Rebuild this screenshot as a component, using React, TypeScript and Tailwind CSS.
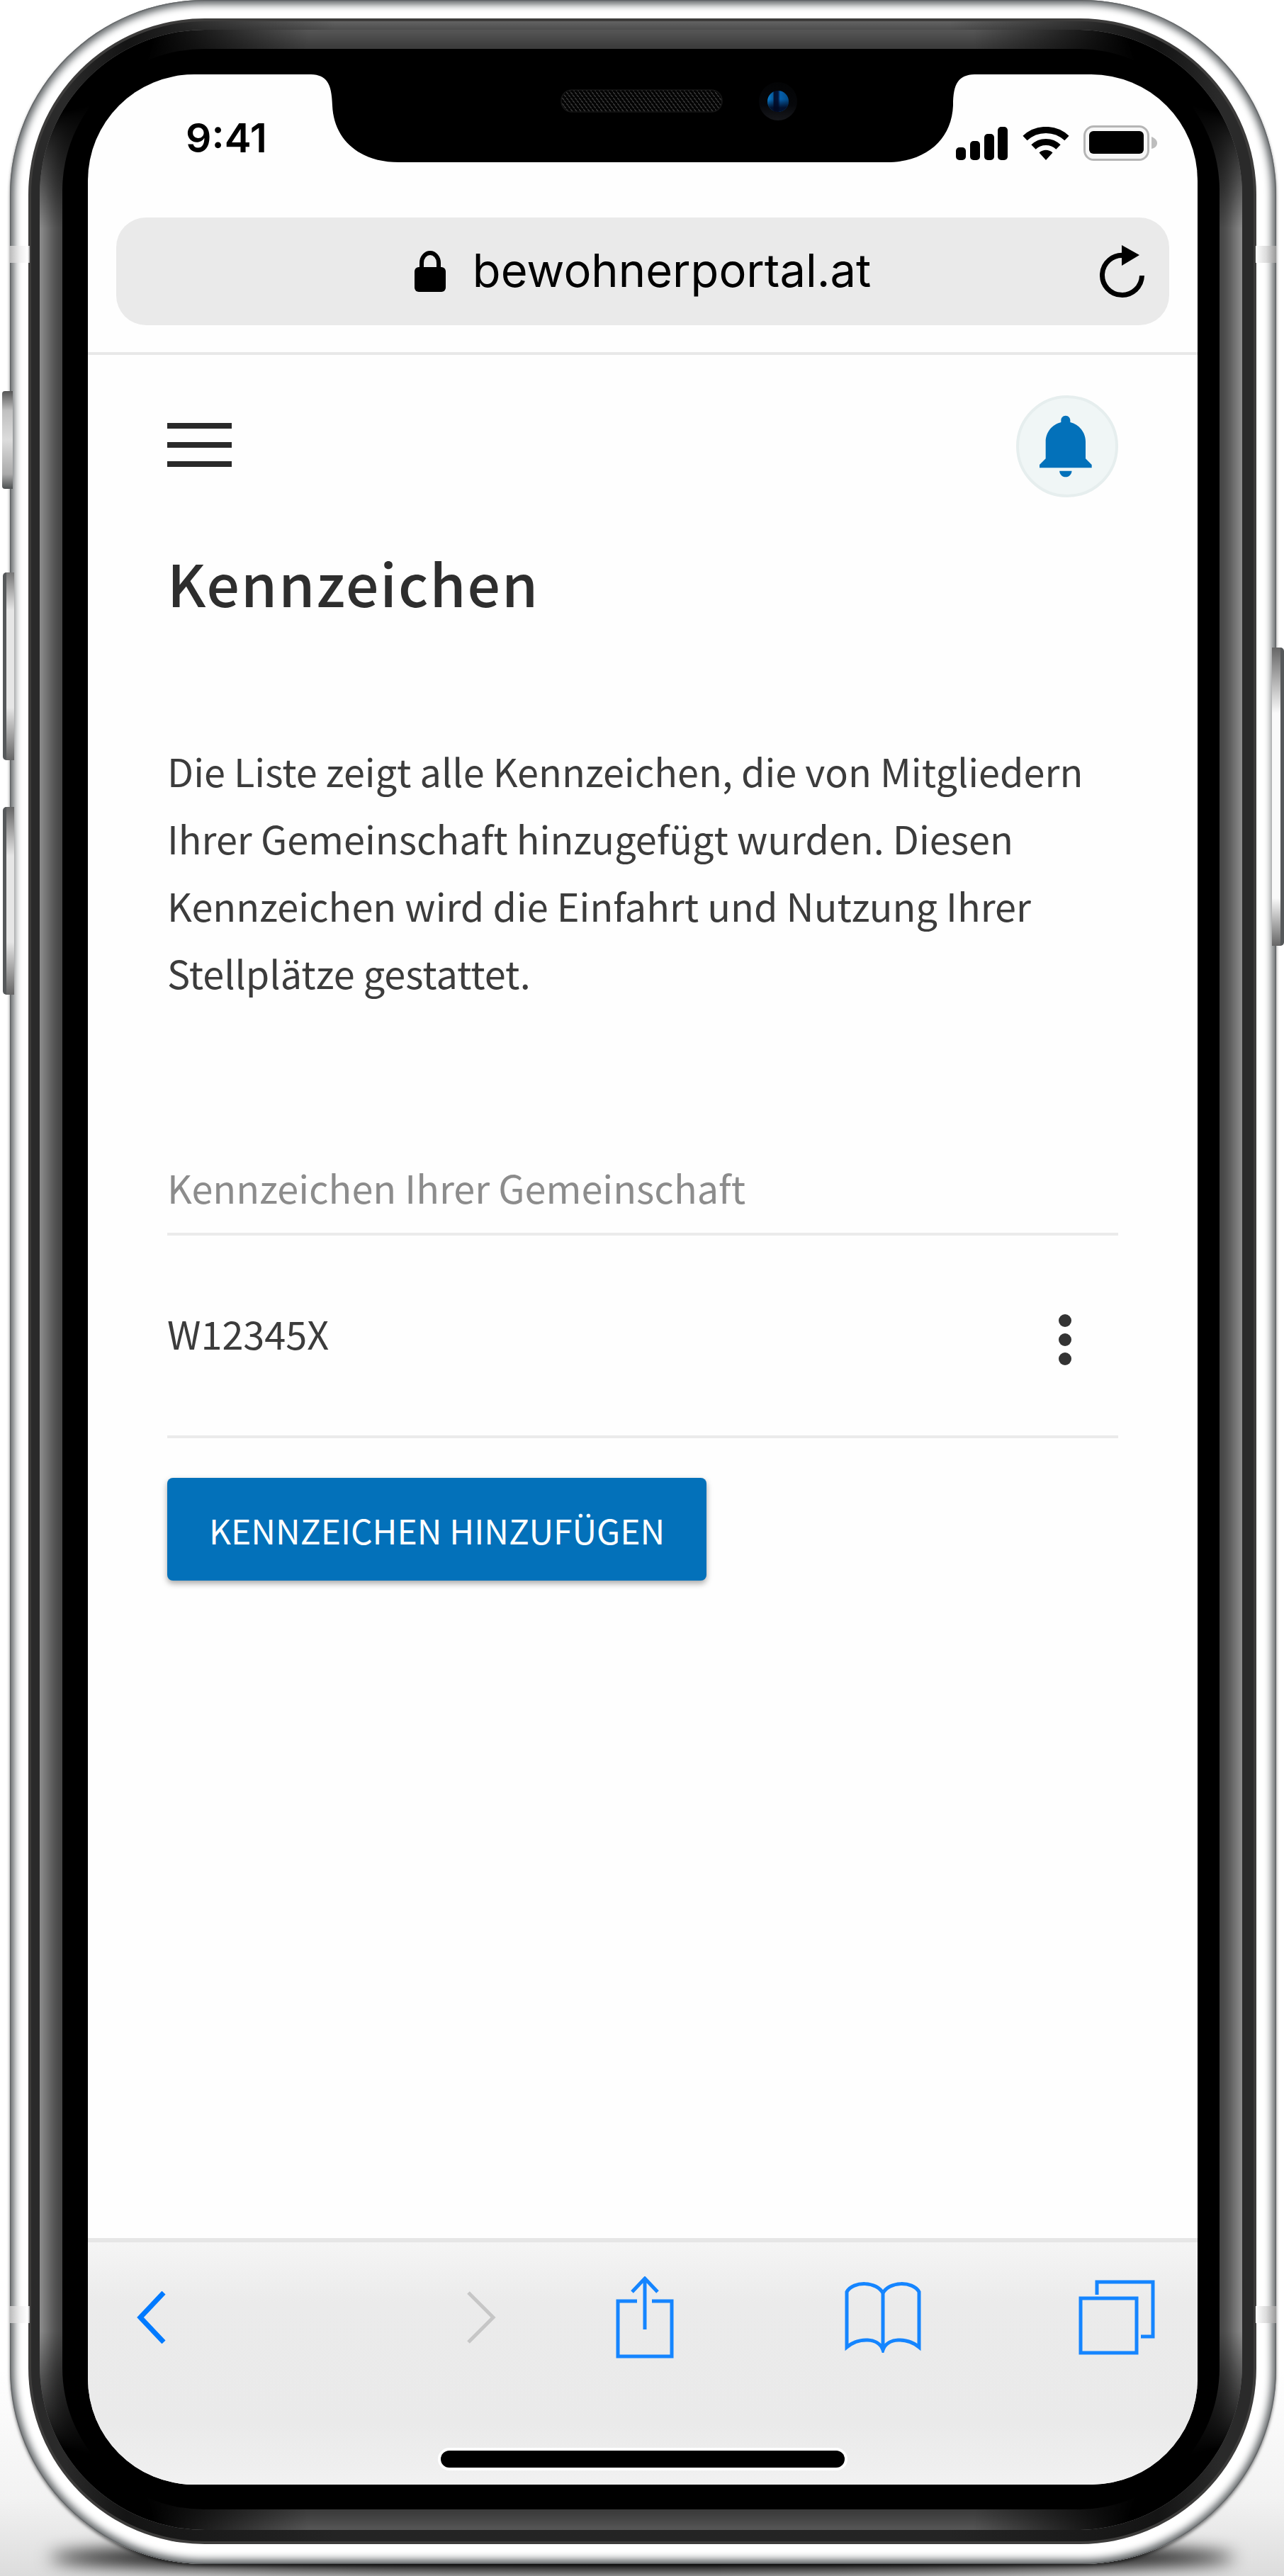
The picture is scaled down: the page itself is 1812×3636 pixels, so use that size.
import type { ReactNode } from "react";

function Notch() {
  return (
    <svg
      aria-hidden="true"
      viewBox="0 0 936 124"
      className="absolute left-1/2 top-0 h-[124px] w-[936px] -translate-x-1/2"
    >
      <defs>
        <pattern id="mesh" width="6" height="8" patternUnits="userSpaceOnUse">
          <rect width="6" height="8" fill="#040404" />
          <path d="M0 1l3 3M3 5l3 3" stroke="#3c3c3c" strokeWidth="1.4" />
        </pattern>
        <linearGradient id="lens" x1="0" y1="0" x2="1" y2="0">
          <stop offset="0" stopColor="#0a7fd0" />
          <stop offset=".25" stopColor="#075a9c" />
          <stop offset=".32" stopColor="#02102f" />
          <stop offset=".5" stopColor="#02143a" />
          <stop offset=".6" stopColor="#0660ac" />
          <stop offset="1" stopColor="#034a86" />
        </linearGradient>
        <linearGradient id="lensShade" x1="0" y1="0" x2="0" y2="1">
          <stop offset=".4" stopColor="#010820" stopOpacity="0" />
          <stop offset=".8" stopColor="#010820" stopOpacity=".9" />
        </linearGradient>
        <linearGradient id="lensRing" x1="0" y1="0" x2="0" y2="1">
          <stop offset="0" stopColor="#030405" />
          <stop offset=".6" stopColor="#06070a" />
          <stop offset="1" stopColor="#17181c" />
        </linearGradient>
      </defs>
      <path
        d="M0 0H936C914 1 906 12 906 44C904 92 868 124 812 124H124C68 124 32 92 30 44C29 12 22 1 0 0Z"
        fill="#000"
      />
      <rect x="353" y="22" width="227" height="31" rx="15" fill="url(#mesh)" stroke="#151515" strokeWidth="1.5" />
      <circle cx="659" cy="38" r="27" fill="url(#lensRing)" />
      <circle cx="659" cy="38" r="15" fill="url(#lens)" />
      <circle cx="659" cy="38" r="15" fill="url(#lensShade)" />
    </svg>
  );
}

function StatusBar() {
  return (
    <div className="flex h-[202px] items-center justify-between pb-2 pl-[138px] pr-[57px]">
      <time className="pb-4 font-['Inter',sans-serif] text-[57px] font-semibold leading-none text-black">9:41</time>
      <div className="flex items-center gap-[20px]">
        <svg aria-label="Mobilfunksignal" viewBox="0 0 74 47" className="h-[47px] w-[74px]">
          <rect x="0" y="29" width="14" height="18" rx="5" />
          <rect x="20" y="20" width="14" height="27" rx="5" />
          <rect x="40" y="10" width="14" height="37" rx="5" />
          <rect x="59" y="0" width="14" height="47" rx="5" />
        </svg>
        <svg aria-label="WLAN" viewBox="0 0 66 47" className="h-[47px] w-[66px]">
          <path d="M3.500 16C20 0.500 46 0.500 62.500 16" fill="none" stroke="#000" strokeWidth="9" />
          <path d="M15.500 28.500C25 19 41 19 50.500 28.500" fill="none" stroke="#000" strokeWidth="9" />
          <path d="M23.500 36.500C29 31.500 37 31.500 42.500 36.500L33 47Z" />
        </svg>
        <svg aria-label="Akku voll" viewBox="0 0 104 50" className="h-[50px] w-[104px]">
          <rect x="1.500" y="1.500" width="90" height="47" rx="13" fill="#f7f7f7" stroke="#b5b5b5" strokeWidth="3" />
          <rect x="8" y="8" width="77" height="32" rx="6" />
          <path d="M96 16c5 2 8 5 8 9s-3 7-8 8z" fill="#bdbdbd" />
        </svg>
      </div>
    </div>
  );
}

function AddressBar() {
  return (
    <div className="border-b-4 border-[#e8e8e8] px-[40px] pb-[38px]">
      <div className="flex h-[152px] items-center rounded-[42px] bg-[#eaeaea] pl-[98px] pr-[34px]">
        <div className="flex flex-1 items-center justify-center gap-[38px]">
          <svg aria-label="Sichere Verbindung" viewBox="0 0 44 58" className="h-[58px] w-[44px]">
            <path d="M10 27V17a12 14 0 0 1 24 0v10" fill="none" stroke="#000" strokeWidth="6" />
            <rect y="23" width="44" height="35" rx="6" />
          </svg>
          <span className="pb-1 font-['Inter',sans-serif] text-[65px] leading-none text-black">bewohnerportal.at</span>
        </div>
        <button type="button" aria-label="Neu laden">
          <svg viewBox="0 0 64 74" className="h-[74px] w-[64px]">
            <path d="M34 14.500A28 28 0 1 0 59.500 43" fill="none" stroke="#000" strokeWidth="7" />
            <path d="M31 0L56 14L31 29Z" />
          </svg>
        </button>
      </div>
    </div>
  );
}

function PortalContent() {
  return (
    <main className="flex-1 px-[112px] pt-[57px] font-['Noto_Sans_CJK_JP',sans-serif] text-[#3c3c3c]">
      <header className="flex items-center justify-between">
        <button type="button" aria-label="Menü" className="flex w-[91px] flex-col gap-[19px] pb-1">
          <span className="h-2 bg-[#2a2a2a]" />
          <span className="h-2 bg-[#2a2a2a]" />
          <span className="h-2 bg-[#2a2a2a]" />
        </button>
        <button
          type="button"
          aria-label="Benachrichtigungen"
          className="flex size-[144px] items-center justify-center rounded-full border-4 border-[#e6eeee] bg-[#f0f6f6]"
        >
          <svg viewBox="0 0 24 24" className="size-[104px] fill-[#0371ba]">
            <path d="M11.500 22c1.100 0 2-.9 2-2h-4c0 1.100.9 2 2 2zm6.500-6v-5.500c0-3.070-2.130-5.640-5-6.320V3.500c0-.83-.67-1.500-1.500-1.500S10 2.670 10 3.500v.68C7.130 4.860 5 7.430 5 10.500V16l-2 2v1h17v-1l-2-2z" />
          </svg>
        </button>
      </header>
      <h1 className="mt-[60px] text-[82px] font-medium leading-[120px] tracking-wide text-[#2e2e2e]">Kennzeichen</h1>
      <p className="mt-[158px] text-[54px] leading-[95px]">
        Die Liste zeigt alle Kennzeichen, die von Mitgliedern Ihrer Gemeinschaft hinzugefügt wurden. Diesen Kennzeichen
        wird die Einfahrt und Nutzung Ihrer Stellplätze gestattet.
      </p>
      <section className="mt-[208px]">
        <h2 className="border-b-4 border-[#ebebeb] pb-[17px] text-[54px] leading-[95px] text-[#8c8c8c]">
          Kennzeichen Ihrer Gemeinschaft
        </h2>
        <ul>
          <li className="flex h-[286px] items-center justify-between border-b-4 border-[#ebebeb] pr-[65px]">
            <span className="pb-2 text-[54px] leading-[95px]">W12345X</span>
            <button type="button" aria-label="Optionen für W12345X" className="pt-3">
              <svg viewBox="0 0 20 72" className="h-[72px] w-[20px] fill-[#333]">
                <circle cx="10" cy="9" r="9" />
                <circle cx="10" cy="36" r="9" />
                <circle cx="10" cy="63" r="9" />
              </svg>
            </button>
          </li>
        </ul>
        <button
          type="button"
          className="mt-[56px] h-[145px] rounded-lg bg-[#0371ba] px-[59px] text-[48px] text-white shadow-[0_4px_8px_rgba(0,0,0,0.35)]"
        >
          KENNZEICHEN HINZUFÜGEN
        </button>
      </section>
    </main>
  );
}

function ToolButton({ label, disabled, children }: { label: string; disabled?: boolean; children: ReactNode }) {
  return (
    <button
      type="button"
      aria-label={label}
      disabled={disabled}
      className="text-[#1585ff] disabled:text-[#c6c6c6]"
    >
      {children}
    </button>
  );
}

function BrowserToolbar() {
  return (
    <footer className="flex flex-col items-center justify-between border-t-[6px] border-[#e6e6e6] bg-[linear-gradient(#f5f5f5,#ebebeb_25%,#eaeaea_75%,#f1f1f1)] pb-[24px] pt-[48px]">
      <nav
        aria-label="Browser"
        className="grid h-[116px] w-full grid-cols-[466fr_210fr_323fr_330fr_108px] items-center justify-items-start pl-[69px] pr-[60px]"
      >
        <ToolButton label="Zurück">
          <svg viewBox="0 0 41 74" className="h-[74px] w-[41px]" fill="none" stroke="#007aff" strokeWidth="7">
            <path d="M38 2L5 37L38 72" />
          </svg>
        </ToolButton>
        <ToolButton label="Vorwärts" disabled>
          <svg viewBox="0 0 41 74" className="h-[74px] w-[41px]" fill="none" stroke="currentColor" strokeWidth="5">
            <path d="M2 2L37 37L2 72" />
          </svg>
        </ToolButton>
        <ToolButton label="Teilen">
          <svg viewBox="0 0 82 116" className="h-[116px] w-[82px]" fill="none" stroke="currentColor" strokeWidth="5">
            <path d="M30 35H3V113H79V35H51M41 75V3M23 22L41 3L59 22" />
          </svg>
        </ToolButton>
        <ToolButton label="Lesezeichen">
          <svg viewBox="0 0 108 100" className="h-[100px] w-[108px]" fill="none" stroke="currentColor" strokeWidth="5">
            <path d="M54 16C46 -1 12 -2 3 14V92C20 78 48 78 54 96C60 78 88 78 105 92V14C96 -2 62 -1 54 16V96" />
          </svg>
        </ToolButton>
        <ToolButton label="Tabs">
          <svg viewBox="0 0 108 106" className="h-[106px] w-[108px]" fill="none" stroke="currentColor" strokeWidth="5">
            <path d="M3 26H82V103H3ZM26 21V3H105V80H88" />
          </svg>
        </ToolButton>
      </nav>
      <div className="mt-[130px] h-[24px] w-[570px] rounded-full bg-black shadow-[0_0_0_4px_#fff]" />
    </footer>
  );
}

export default function App() {
  return (
    <div className="relative flex min-h-screen flex-col overflow-hidden bg-[linear-gradient(#fff_92%,#f2f2f2_97%,#dcdcdc)] pb-[17px] pl-[14px] pr-[11px]">
      <div className="absolute bottom-[4px] left-[70px] right-[70px] h-[44px] rounded-[50%] bg-black blur-[12px]" />
      <div className="relative flex flex-1 rounded-[275px] bg-white pb-[28px] pl-[26px] pr-[28px] pt-[26px] shadow-[0_3px_4px_rgba(0,0,0,0.5),inset_0_0_2px_1px_#55585a,inset_0_0_5px_4px_#7c7f81,inset_0_0_8px_9px_#a0a3a4]">
        <div className="absolute left-[-11px] top-[552px] h-[138px] w-[15px] rounded-l-[4px] bg-[linear-gradient(#555,#c0c0c0_20%,#dcdcdc_50%,#aaa_85%,#4c4f50)]" />
        <div className="absolute left-[-10px] top-[808px] h-[265px] w-[16px] rounded-l-[5px] border-l-[5px] border-[#55585a] bg-[linear-gradient(#777,#e6e6e6_20%,#e6e6e6_72%,#666)]" />
        <div className="absolute left-[-10px] top-[1139px] h-[265px] w-[16px] rounded-l-[5px] border-l-[5px] border-[#55585a] bg-[linear-gradient(#666,#e6e6e6_26%,#e6e6e6_72%,#666)]" />
        <div className="absolute right-[-11px] top-[914px] h-[421px] w-[17px] rounded-r-[5px] border-r-[5px] border-[#55585a] bg-[linear-gradient(#666,#fafafa_22%,#fafafa_84%,#666)]" />
        <div className="relative flex flex-1 rounded-[249px] bg-[linear-gradient(to_right,#2a2a2a_3%,#141414_8%,transparent_25%,transparent_75%,#141414_92%,#2a2a2a_97%),linear-gradient(#6a6a6a,#4d4d4d_16px,#2c2c2c_80px,#242424)] pb-[20px] pl-[16px] pr-[20px] pt-[16px] shadow-[inset_0_0_0_4px_#3d3c3b]">
          <div className="flex flex-1 rounded-[233px] bg-[#404040] shadow-[inset_0_0_26px_11px_#a0a0a0]">
            <div className="flex flex-1 rounded-[233px] bg-[radial-gradient(380px_280px_at_0_0,#000_42%,transparent),radial-gradient(380px_280px_at_100%_0,#000_42%,transparent),radial-gradient(380px_280px_at_0_100%,#000_42%,transparent),radial-gradient(380px_280px_at_100%_100%,#000_42%,transparent),linear-gradient(rgba(50,50,50,0.6)_27px,transparent_100px,transparent_calc(100%-100px),rgba(50,50,50,0.6)_calc(100%-29px))] px-[32px] pb-[29px] pt-[27px]">
              <div className="flex flex-1 rounded-[200px] bg-black pb-[35px] pl-[36px] pr-[31px] pt-[36px]">
                <div className="relative flex flex-1 flex-col overflow-hidden rounded-[150px] bg-[#fefefe]">
                  <Notch />
                  <StatusBar />
                  <AddressBar />
                  <PortalContent />
                  <BrowserToolbar />
                </div>
              </div>
            </div>
          </div>
        </div>
        <div className="absolute left-0 top-[347px] h-[24px] w-[28px] bg-[linear-gradient(to_right,#bbb,#eee_50%,#fff_90%,#999)]" />
        <div className="absolute right-0 top-[347px] h-[24px] w-[29px] bg-[linear-gradient(to_left,#999,#ddd_50%,#fff)]" />
        <div className="absolute bottom-[340px] left-0 h-[24px] w-[28px] bg-[linear-gradient(to_right,#bbb,#eee_50%,#fff_90%,#999)]" />
        <div className="absolute bottom-[340px] right-0 h-[24px] w-[29px] bg-[linear-gradient(to_left,#999,#ddd_50%,#fff)]" />
      </div>
    </div>
  );
}
